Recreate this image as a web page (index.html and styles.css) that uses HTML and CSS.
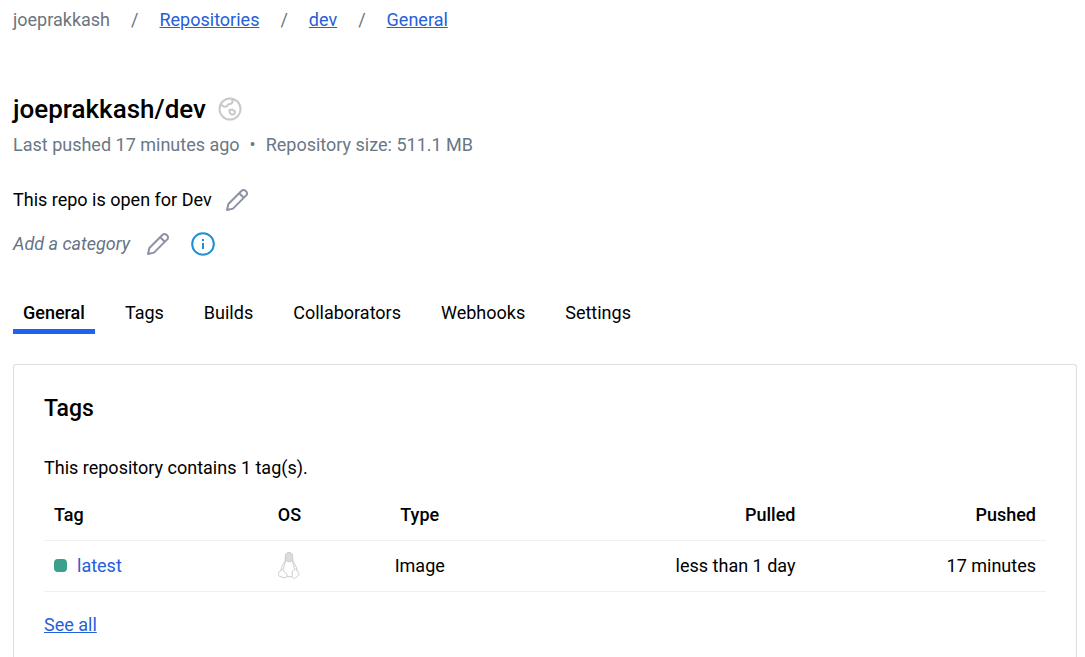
FILE: index.html
```html
<!DOCTYPE html>
<html lang="en">
<head>
<meta charset="utf-8">
<meta name="viewport" content="width=device-width, initial-scale=1">
<title>joeprakkash/dev</title>
<link rel="stylesheet" href="styles.css">
</head>
<body>
<nav class="breadcrumb" aria-label="Breadcrumb">
  <span>joeprakkash</span>
  <span>/</span>
  <a href="#">Repositories</a>
  <span>/</span>
  <a href="#">dev</a>
  <span>/</span>
  <a href="#">General</a>
</nav>

<header class="repo">
  <div class="title-row">
    <h1>joeprakkash/dev</h1>
    <svg class="icon globe" viewBox="0 0 24 24" aria-hidden="true">
      <circle cx="12" cy="12" r="10.5"/>
      <path d="M3 7.600 6 9.800l3-.6 1-1.700 3.600-1 1.200-2.300-1-1.700"/>
      <path d="M11.400 13l3-.4 2.600 1.800-.4 2.400-2.600 1-2-1.600z"/>
    </svg>
  </div>
  <p class="meta"><span>Last pushed 17 minutes ago</span><span class="dot">•</span><span>Repository size: 511.1 MB</span></p>
  <div class="line description">
    <span>This repo is open for Dev</span>
    <button class="icon-button" type="button" aria-label="Edit description">
      <svg class="icon pencil" viewBox="0 0 24 24" aria-hidden="true">
        <path d="M2 22l1.400-6L16.600 2.800a2.600 2.600 0 0 1 3.800 0l.8.8a2.600 2.600 0 0 1 0 3.800L8 20.600zM14.200 5.200l4.600 4.600"/>
      </svg>
    </button>
  </div>
  <div class="line category">
    <em>Add a category</em>
    <button class="icon-button" type="button" aria-label="Edit category">
      <svg class="icon pencil" viewBox="0 0 24 24" aria-hidden="true">
        <path d="M2 22l1.400-6L16.600 2.800a2.600 2.600 0 0 1 3.800 0l.8.8a2.600 2.600 0 0 1 0 3.800L8 20.600zM14.200 5.200l4.600 4.600"/>
      </svg>
    </button>
    <button class="icon-button" type="button" aria-label="About categories">
      <svg class="icon info" viewBox="0 0 24 24" aria-hidden="true">
        <circle cx="12" cy="12" r="10.8"/>
        <path d="M12 11v6M12 7v2"/>
      </svg>
    </button>
  </div>
</header>

<nav class="tabs" aria-label="Repository sections">
  <a class="tab active" href="#" aria-current="page">General</a>
  <a class="tab" href="#">Tags</a>
  <a class="tab" href="#">Builds</a>
  <a class="tab" href="#">Collaborators</a>
  <a class="tab" href="#">Webhooks</a>
  <a class="tab" href="#">Settings</a>
</nav>

<main class="card">
  <h2>Tags</h2>
  <p class="summary">This repository contains 1 tag(s).</p>
  <table class="tags">
    <thead>
      <tr>
        <th class="col-tag">Tag</th>
        <th class="col-os">OS</th>
        <th class="col-type">Type</th>
        <th class="col-pulled">Pulled</th>
        <th class="col-pushed">Pushed</th>
      </tr>
    </thead>
    <tbody>
      <tr>
        <td class="col-tag"><a class="tag-link" href="#"><span class="status"></span>latest</a></td>
        <td class="col-os">
          <svg class="penguin" viewBox="0 0 24 30" role="img" aria-label="Linux">
            <path class="head" d="M8 9V5c0-3 1.600-4.500 4-4.500S16 2 16 5v4l-4 1.500z"/>
            <path d="M8 9c-1 3-4.600 6-4.600 11M16 9c1 3 4.600 6 4.600 11"/>
            <path d="M8.400 10c-1 3-2 5-2 8.500M15.600 10c1 3 2 5 2 8.500"/>
            <path d="M5 18.500 9.600 24c1 2-.6 4-3 3.600L1.600 26c-1.200-.6-.6-2-.6-4.400 0-1.400 1.600-.8 2.400-1.600z"/>
            <path d="M19 18.500c-1.400 1-3.400 1-3.600 3v5c.6 2.400 3 2 4.200.6l3-2.600c.8-1-.6-2-1.200-4z"/>
            <path d="M9.600 26.500h5.800"/>
          </svg>
        </td>
        <td class="col-type">Image</td>
        <td class="col-pulled">less than 1 day</td>
        <td class="col-pushed">17 minutes</td>
      </tr>
    </tbody>
  </table>
  <a class="see-all" href="#">See all</a>
</main>
</body>
</html>
```
FILE: styles.css
```css
* {
  box-sizing: border-box;
}

body {
  display: flex;
  flex-direction: column;
  min-height: 100vh;
  margin: 0;
  padding: 8px 8px 0 13px;
  background: #fff;
  color: #000;
  font-family: Roboto, "Liberation Sans", sans-serif;
  font-size: 18px;
  line-height: 24px;
}

h1,
h2,
p {
  margin: 0;
  font-weight: 500;
}

a {
  color: #2560d8;
}

.breadcrumb {
  display: flex;
  gap: 21px;
  color: #6c757d;
}

.repo {
  padding-top: 60px;
}

.title-row {
  display: flex;
  align-items: center;
  gap: 12px;
}

h1 {
  font-size: 26px;
  line-height: 34px;
}

.icon {
  display: block;
  width: 24px;
  height: 24px;
  fill: none;
  stroke-width: 2;
  stroke-linejoin: round;
}

.globe {
  stroke: #c9c9c9;
}

.pencil {
  stroke: #8c91a5;
}

.info {
  stroke: #1c90d4;
}

.meta {
  display: flex;
  gap: 10px;
  padding-top: 7px;
  color: #6b7785;
  font-weight: 400;
}

.dot {
  font-size: 18px;
}

.line {
  display: flex;
  align-items: center;
}

.description {
  gap: 13px;
  padding-top: 31px;
}

.category {
  gap: 21px;
  padding-top: 20px;
}

.category em {
  margin-right: -5px;
  color: #677285;
}

.icon-button {
  padding: 0;
  border: 0;
  background: none;
  cursor: pointer;
}

.tabs {
  display: flex;
  gap: 20px;
  padding-top: 45px;
}

.tab {
  padding: 0 10px 4px;
  border-bottom: 5px solid transparent;
  color: #000;
  text-decoration: none;
}

.tab.active {
  border-color: #1d63ed;
  font-weight: 500;
}

.card {
  flex: 1;
  margin-top: 30px;
  padding: 30px 30px 20px;
  border: 1px solid #dedede;
  border-bottom: 0;
  border-radius: 3px 3px 0 0;
}

h2 {
  font-size: 23px;
  line-height: 28px;
}

.summary {
  padding-top: 33px;
  font-weight: 400;
}

.tags {
  width: 100%;
  margin: 10px 0 21px;
  border-collapse: collapse;
  table-layout: fixed;
}

th,
td {
  padding: 0 10px;
  border-bottom: 1px solid #f0f0f0;
  vertical-align: middle;
}

th {
  height: 50px;
  font-weight: 500;
}

td {
  height: 51px;
}

.col-tag {
  width: 18%;
  text-align: left;
}

.col-os,
.col-type {
  width: 13%;
  text-align: center;
}

.col-pulled {
  width: 32%;
  text-align: right;
}

.col-pushed {
  width: 24%;
  text-align: right;
}

.tag-link {
  display: flex;
  align-items: center;
  gap: 10px;
  text-decoration: none;
}

.status {
  width: 13px;
  height: 13px;
  border-radius: 4px;
  background: #3c9f8c;
}

.penguin {
  display: block;
  width: 24px;
  height: 28px;
  margin: 0 auto;
  fill: none;
  stroke: #c8c8c8;
  stroke-width: 1;
}

.head {
  fill: #dcdcdc;
}
```
